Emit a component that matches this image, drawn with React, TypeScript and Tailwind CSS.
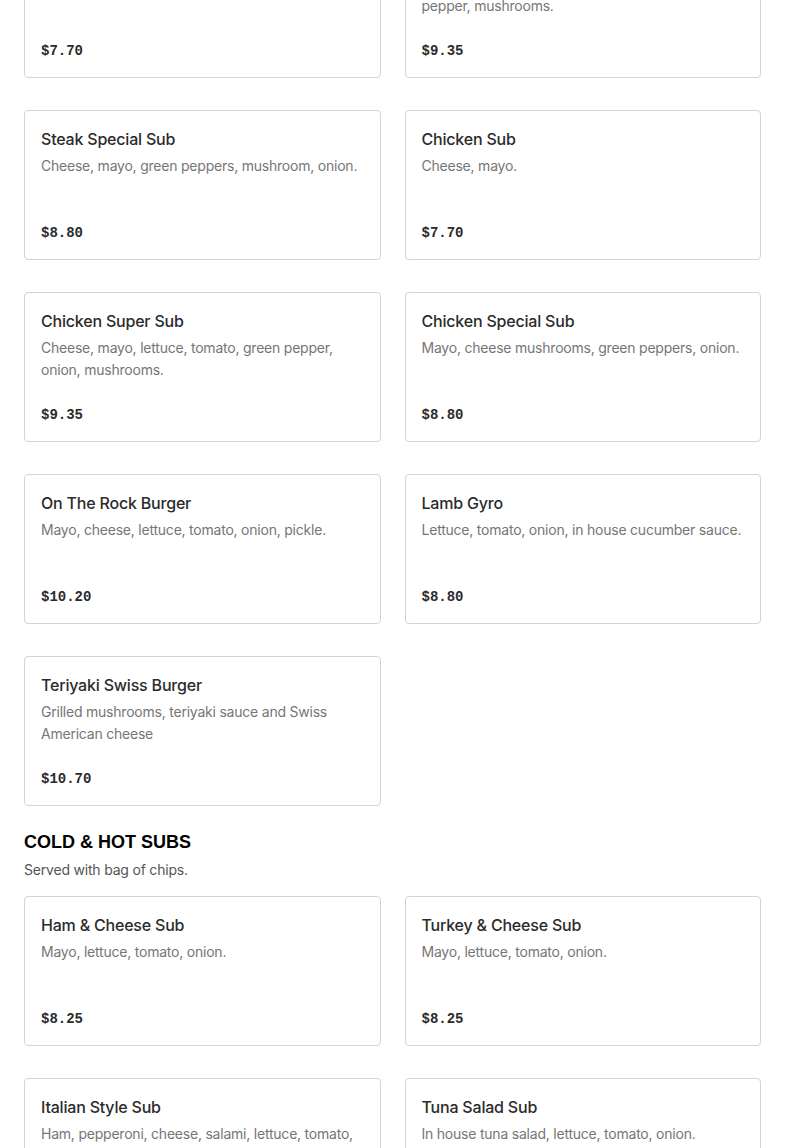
const sandwiches = [
  { name: "Steak Sub", desc: "Cheese, mayo.", price: "$7.70" },
  {
    name: "Steak Super Sub",
    desc: "Cheese, mayo, lettuce, tomato, onion, green pepper, mushrooms.",
    price: "$9.35",
  },
  {
    name: "Steak Special Sub",
    desc: "Cheese, mayo, green peppers, mushroom, onion.",
    price: "$8.80",
  },
  { name: "Chicken Sub", desc: "Cheese, mayo.", price: "$7.70" },
  {
    name: "Chicken Super Sub",
    desc: "Cheese, mayo, lettuce, tomato, green pepper, onion, mushrooms.",
    price: "$9.35",
  },
  {
    name: "Chicken Special Sub",
    desc: "Mayo, cheese mushrooms, green peppers, onion.",
    price: "$8.80",
  },
  {
    name: "On The Rock Burger",
    desc: "Mayo, cheese, lettuce, tomato, onion, pickle.",
    price: "$10.20",
  },
  {
    name: "Lamb Gyro",
    desc: "Lettuce, tomato, onion, in house cucumber sauce.",
    price: "$8.80",
  },
  {
    name: "Teriyaki Swiss Burger",
    desc: "Grilled mushrooms, teriyaki sauce and Swiss American cheese",
    price: "$10.70",
  },
];

const subs = [
  { name: "Ham & Cheese Sub", desc: "Mayo, lettuce, tomato, onion.", price: "$8.25" },
  { name: "Turkey & Cheese Sub", desc: "Mayo, lettuce, tomato, onion.", price: "$8.25" },
  {
    name: "Italian Style Sub",
    desc: "Ham, pepperoni, cheese, salami, lettuce, tomato, onion.",
    price: "$8.80",
  },
  {
    name: "Tuna Salad Sub",
    desc: "In house tuna salad, lettuce, tomato, onion.",
    price: "$8.25",
  },
];

type Item = { name: string; desc: string; price: string };

function MenuCard({ item }: { item: Item }) {
  return (
    <div className="h-[150px] flex flex-col justify-between rounded border border-[#d4d4d4] bg-white p-4">
      <div>
        <h3 className="text-[16px] leading-6 font-medium tracking-[-0.2px] text-[#2b2b2b]">
          {item.name}
        </h3>
        <p className="mt-1 text-[14px] leading-[22px] tracking-[-0.22px] text-[#767676]">
          {item.desc}
        </p>
      </div>
      <p className="text-[14px] leading-5 font-bold text-[#2b2b2b] font-['Liberation_Mono',monospace]">
        {item.price}
      </p>
    </div>
  );
}

export default function App() {
  return (
    <div className="h-[1148px] overflow-hidden bg-white font-['Inter',sans-serif]">
      <div className="-mt-[72px] px-6">
        <div className="grid grid-cols-2 gap-x-6 gap-y-8">
          {sandwiches.map((item) => (
            <MenuCard key={item.name} item={item} />
          ))}
        </div>
        <section className="mt-6">
          <h2 className="text-[18px] leading-6 font-black text-black font-['Liberation_Sans',sans-serif]">
            COLD &amp; HOT SUBS
          </h2>
          <p className="mt-[6px] text-[14px] leading-5 tracking-[-0.2px] text-[#555]">
            Served with bag of chips.
          </p>
          <div className="mt-4 grid grid-cols-2 gap-x-6 gap-y-8">
            {subs.map((item) => (
              <MenuCard key={item.name} item={item} />
            ))}
          </div>
        </section>
      </div>
    </div>
  );
}
